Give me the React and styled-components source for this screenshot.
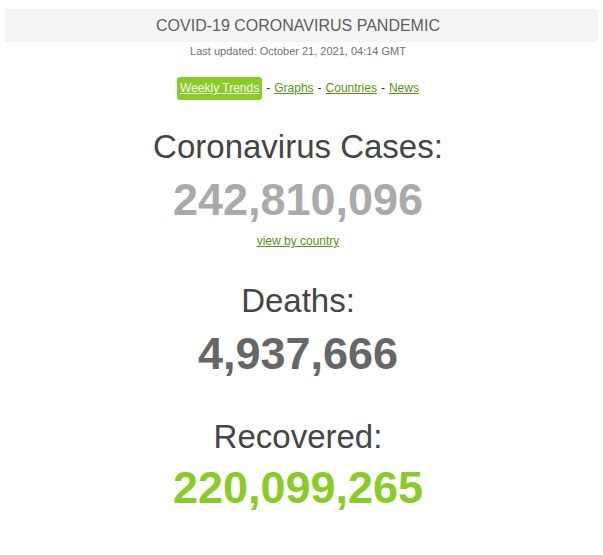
import React from 'react'
import styled, { createGlobalStyle } from 'styled-components'

const GlobalStyle = createGlobalStyle`
  body {
    margin: 0;
    background: #fff;
    font-family: "Liberation Sans", Arial, sans-serif;
  }
`

const Page = styled.div`
  padding: 9px 5px 0;
  text-align: center;
`

const TitleBar = styled.div`
  height: 33px;
  padding-right: 7px;
  display: flex;
  align-items: center;
  justify-content: center;
  background: #f4f4f4;
  color: #5e5e5e;
  font-size: 16px;
`

const Content = styled.div`
  padding-right: 7px;
`

const Updated = styled.div`
  margin-top: 2px;
  font-size: 11px;
  line-height: 14px;
  color: #707070;
`

const Nav = styled.div`
  margin-top: 19px;
  display: flex;
  justify-content: center;
  align-items: center;
  gap: 4px;
  font-size: 12px;
  line-height: 15px;
  color: #333;
`

const NavLink = styled.a`
  color: ${p => (p.$active ? '#f4fbe8' : '#5d8c22')};
  background: ${p => (p.$active ? '#8aca2b' : 'transparent')};
  padding: ${p => (p.$active ? '4px 3px' : '0')};
  border-radius: 3px;
  text-decoration: underline;
  cursor: pointer;
`

const Counter = styled.div`
  margin-top: ${p => p.$top}px;
`

const Heading = styled.h1`
  margin: 0;
  font-size: 33px;
  line-height: 40px;
  font-weight: normal;
  color: #454545;
`

const Number = styled.div`
  margin-top: ${p => p.$gap}px;
  font-size: 45px;
  line-height: 54px;
  font-weight: bold;
  color: ${p => p.$color};
`

const SubLink = styled.a`
  display: block;
  margin-top: 7px;
  font-size: 12px;
  line-height: 14px;
  color: #5d8c22;
  text-decoration: underline;
`

const links = ['Graphs', 'Countries', 'News']

export default function App() {
  return (
    <Page>
      <GlobalStyle />
      <TitleBar>COVID-19 CORONAVIRUS PANDEMIC</TitleBar>
      <Content>
        <Updated>Last updated: October 21, 2021, 04:14 GMT</Updated>
        <Nav>
          <NavLink $active>Weekly Trends</NavLink>
          {links.map(l => (
            <React.Fragment key={l}>
              <span>-</span>
              <NavLink>{l}</NavLink>
            </React.Fragment>
          ))}
        </Nav>
        <Counter $top={27}>
          <Heading>Coronavirus Cases:</Heading>
          <Number $gap={6} $color="#aaaaaa">242,810,096</Number>
          <SubLink>view by country</SubLink>
        </Counter>
        <Counter $top={33}>
          <Heading>Deaths:</Heading>
          <Number $gap={6} $color="#666666">4,937,666</Number>
        </Counter>
        <Counter $top={36}>
          <Heading>Recovered:</Heading>
          <Number $gap={4} $color="#8aca2b">220,099,265</Number>
        </Counter>
      </Content>
    </Page>
  )
}
